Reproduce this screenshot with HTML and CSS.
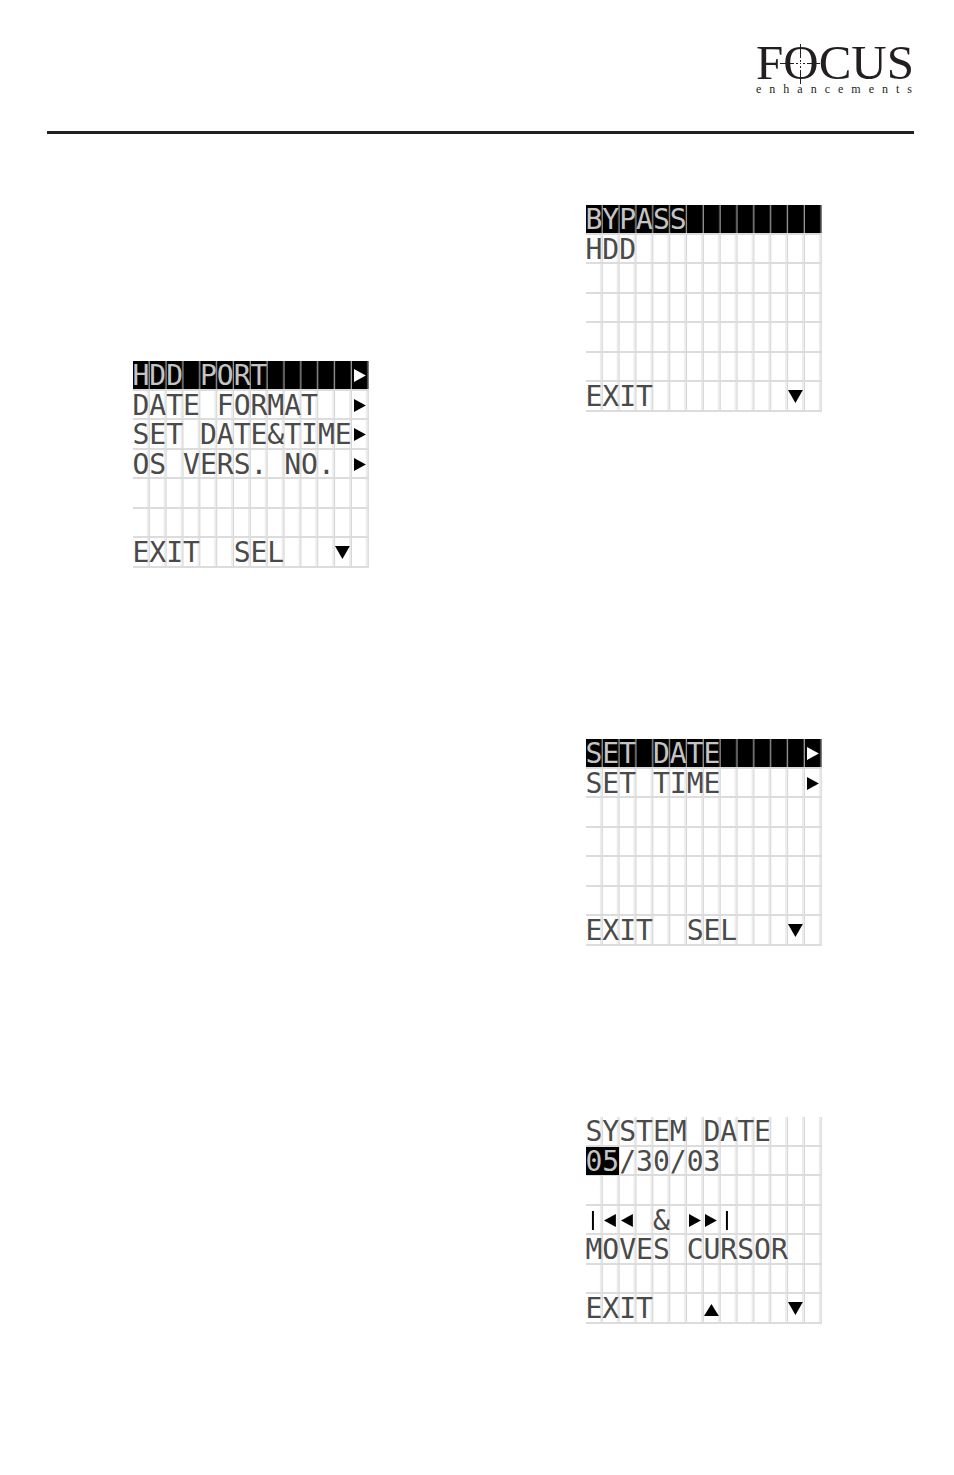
FILE: index.html
```html
<!DOCTYPE html>
<html lang="en">
<head>
    <meta charset="UTF-8">
    <meta name="viewport" content="width=device-width, initial-scale=1.0">
    <link rel="stylesheet" href="styles.css">
    <title>Focus Enhancements</title>
</head>
<body>
    <!-- arrow shapes used by the screens -->
    <svg class="shapes" aria-hidden="true">
        <symbol id="right" viewBox="0 0 17 29"><path d="M2 8 L14 14.500 L2 21 Z"/></symbol>
        <symbol id="left" viewBox="0 0 17 29"><path d="M14 8 L2 14.500 L14 21 Z"/></symbol>
        <symbol id="down" viewBox="0 0 17 29"><path d="M0 8 H15 L7.500 21 Z"/></symbol>
        <symbol id="up" viewBox="0 0 17 29"><path d="M0 22 H15 L7.500 10 Z"/></symbol>
        <symbol id="bar" viewBox="0 0 17 29"><path d="M6 5 H8 V24 H6 Z"/></symbol>
    </svg>
    <header class="header">
        <div class="logo">
            <div class="name">FOCUS</div>
            <div class="sub">enhancements</div>
            <svg class="target" viewBox="0 0 40 40" aria-hidden="true">
                <path d="M20.500 0V14M20.500 16V18M20.500 22V24M20.500 26V40M0 19.500H14M16 19.500H18M23 19.500H25M27 19.500H40M20 19.500H21"/>
            </svg>
        </div>
    </header>
    <main class="columns">
        <div class="column left">
            <div class="screen">
                <div class="row selected">HDD PORT     <svg class="arrow"><use href="#right"/></svg></div>
                <div class="row">DATE FORMAT  <svg class="arrow"><use href="#right"/></svg></div>
                <div class="row">SET DATE&amp;TIME<svg class="arrow"><use href="#right"/></svg></div>
                <div class="row">OS VERS. NO. <svg class="arrow"><use href="#right"/></svg></div>
                <div class="row"></div>
                <div class="row"></div>
                <div class="row">EXIT  SEL   <svg class="arrow"><use href="#down"/></svg></div>
            </div>
        </div>
        <div class="column right">
            <div class="screen bypass">
                <div class="row selected">BYPASS</div>
                <div class="row">HDD</div>
                <div class="row"></div>
                <div class="row"></div>
                <div class="row"></div>
                <div class="row"></div>
                <div class="row">EXIT        <svg class="arrow"><use href="#down"/></svg></div>
            </div>
            <div class="screen datetime">
                <div class="row selected">SET DATE     <svg class="arrow"><use href="#right"/></svg></div>
                <div class="row">SET TIME     <svg class="arrow"><use href="#right"/></svg></div>
                <div class="row"></div>
                <div class="row"></div>
                <div class="row"></div>
                <div class="row"></div>
                <div class="row">EXIT  SEL   <svg class="arrow"><use href="#down"/></svg></div>
            </div>
            <div class="screen">
                <div class="row">SYSTEM DATE</div>
                <div class="row"><span class="cursor">05</span>/30/03</div>
                <div class="row"></div>
                <div class="row"><svg class="arrow"><use href="#bar"/></svg><svg class="arrow"><use href="#left"/></svg><svg class="arrow"><use href="#left"/></svg> &amp; <svg class="arrow"><use href="#right"/></svg><svg class="arrow"><use href="#right"/></svg><svg class="arrow"><use href="#bar"/></svg></div>
                <div class="row">MOVES CURSOR</div>
                <div class="row"></div>
                <div class="row">EXIT   <svg class="arrow"><use href="#up"/></svg>    <svg class="arrow"><use href="#down"/></svg></div>
            </div>
        </div>
    </main>
</body>
</html>
```
FILE: styles.css
```css
*{
    box-sizing: border-box;
}
body{
    background: #fff;
    color: #231f20;
    margin: 0;
    padding: 42px 40px 0 47px;
}
.shapes{
    display: none;
}

/* Logo */
.header{
    display: flex;
    justify-content: flex-end;
    padding-bottom: 37px;
    border-bottom: 3px solid #231f20;
}
.logo{
    position: relative;
    font-family: "Liberation Serif", serif;
}
.name{
    font-size: 49px;
    line-height: 42px;
}
.sub{
    font-size: 12px;
    line-height: 10px;
    letter-spacing: 8px;
    margin-right: -8px;
}
.target{
    position: absolute;
    left: 24px;
    top: 2px;
    width: 40px;
    height: 40px;
    stroke: #231f20;
    stroke-width: 1;
}

.columns{
    display: grid;
    grid-template-columns: 1fr 1fr;
    gap: 46px;
    padding-right: 7px;
}
.column{
    display: flex;
    flex-direction: column;
    align-items: center;
}
.left{
    padding-top: 227px;
}
.right{
    padding-top: 71px;
}
.bypass{
    margin-bottom: 327px;
}
.datetime{
    margin-bottom: 171px;
}

/* LCD screen, 14 characters by 7 lines */
.screen{
    display: grid;
    grid-template-rows: repeat(7, minmax(0, 1fr));
    width: 14ch;
    min-height: 0;
    aspect-ratio: 236 / 207;
    font-family: "DejaVu Sans Mono", monospace;
    font-size: 28px;
    line-height: 29px;
    color: #4a4a4a;
}
.row{
    white-space: pre;
    border-bottom: 2px solid #dcdcdc;
    background-image: linear-gradient(to left, #d6d6d6 1px, #ececec 1px, #ececec 3px, transparent 3px);
    background-size: calc(100% / 14) 100%;
}
.selected{
    color: #c4c4c4;
    background-color: #000;
    background-image: linear-gradient(to left, #999 1px, #333 1px, #333 2px, transparent 2px);
}
.cursor{
    display: inline-block;
    height: 28px;
    color: #c4c4c4;
    background: #000;
    vertical-align: top;
}
.arrow{
    width: 1ch;
    height: 29px;
    vertical-align: top;
    fill: #000;
}
.selected .arrow{
    fill: #fff;
}
```
